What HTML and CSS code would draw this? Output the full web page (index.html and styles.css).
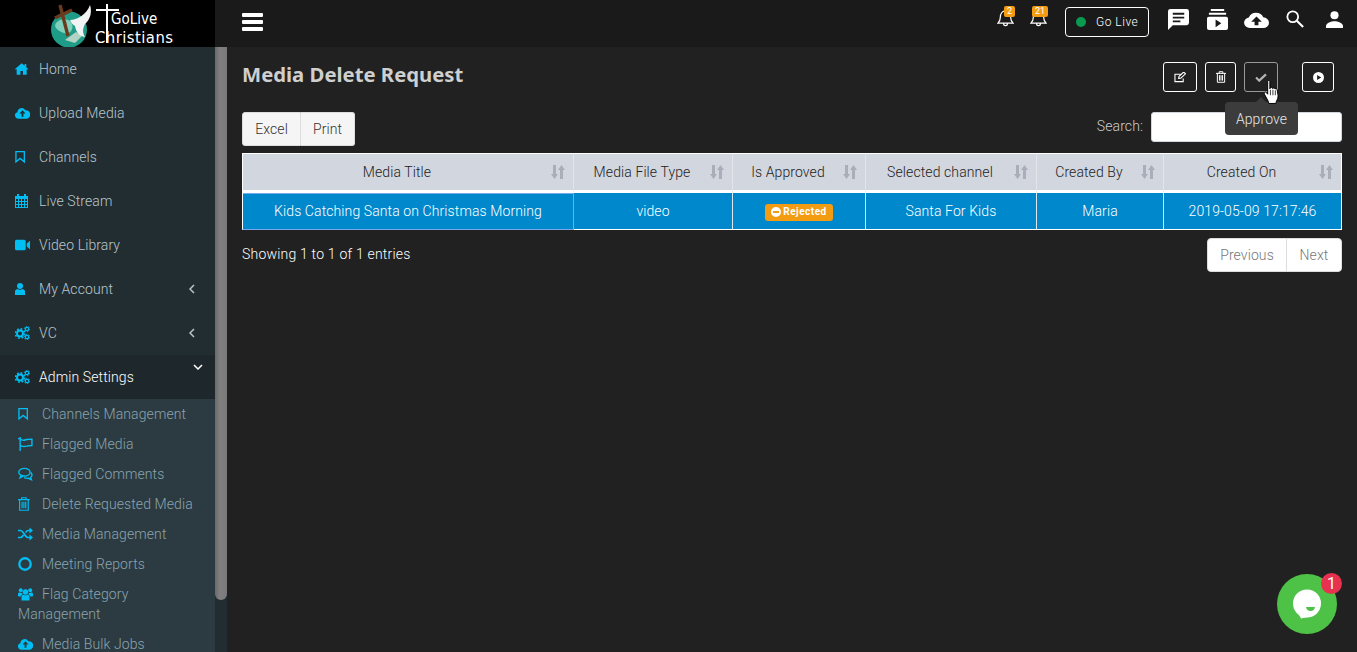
FILE: index.html
```html
<!DOCTYPE html>
<html lang="en">
<head>
<meta charset="utf-8">
<title>Media Delete Request</title>
<link rel="stylesheet" href="styles.css">
</head>
<body>
<svg class="defs" width="0" height="0" aria-hidden="true">
  <symbol id="i-home" viewBox="0 -1 18 16" preserveAspectRatio="xMinYMid meet"><path d="M8 0 0 7l1 1 1-.9V14h4.500V9.500h3V14H14V7.100l1 .9 1-1-2.500-2.200V1h-2v2.100z"/></symbol>
  <symbol id="i-cloud" viewBox="0 0 16 12" preserveAspectRatio="xMinYMid meet"><path fill-rule="evenodd" d="M3.500 12A3.500 3.500 0 0 1 2.600 5.100 4.500 4.500 0 0 1 11 3.100 3.800 3.800 0 0 1 12.500 12zM8 3 4.800 6.400H7V10h2V6.400h2.200z"/></symbol>
  <symbol id="i-bookmark" viewBox="0 -1 13 15" preserveAspectRatio="xMinYMid meet"><path fill="none" stroke="currentColor" stroke-width="1.400" d="M1 .7h9v11L5.500 8 1 11.700z"/></symbol>
  <symbol id="i-cal" viewBox="0 0 13 14" preserveAspectRatio="xMinYMid meet"><path fill-rule="evenodd" d="M0 2h2V0h2v2h5V0h2v2h2v12H0zM1 5v2h2V5zm3 0v2h2V5zm3 0v2h2V5zm3 0v2h2V5zM1 8v2h2V8zm3 0v2h2V8zm3 0v2h2V8zm3 0v2h2V8zm-9 3v2h2v-2zm3 0v2h2v-2zm3 0v2h2v-2zm3 0v2h2v-2z"/></symbol>
  <symbol id="i-video" viewBox="0 0 14 10" preserveAspectRatio="xMinYMid meet"><path d="M1.500 0h7A1.500 1.500 0 0 1 10 1.500v7A1.500 1.500 0 0 1 8.500 10h-7A1.500 1.500 0 0 1 0 8.500v-7A1.500 1.500 0 0 1 1.500 0zM11 3.500 14 1v8l-3-2.500z"/></symbol>
  <symbol id="i-user" viewBox="0 -1 11.500 14" preserveAspectRatio="xMinYMid meet"><circle cx="5" cy="3" r="3"/><path d="M0 12V8.500C0 7 1.500 6 2.500 6c.7.500 1.500.8 2.500.8S6.800 6.500 7.500 6C8.500 6 10 7 10 8.500V12z"/></symbol>
  <symbol id="i-cogs" viewBox="0 0 15 14" preserveAspectRatio="xMinYMid meet"><circle cx="5" cy="7.500" r="3" fill="none" stroke="currentColor" stroke-width="2"/><circle cx="5" cy="7.500" r="4.700" fill="none" stroke="currentColor" stroke-width="1.600" stroke-dasharray="1.800 1.900"/><circle cx="12" cy="3" r="1.700" fill="none" stroke="currentColor" stroke-width="1.200"/><circle cx="12" cy="3" r="2.700" fill="none" stroke="currentColor" stroke-width="1" stroke-dasharray="1.400 1.400"/><circle cx="12" cy="11" r="1.700" fill="none" stroke="currentColor" stroke-width="1.200"/><circle cx="12" cy="11" r="2.700" fill="none" stroke="currentColor" stroke-width="1" stroke-dasharray="1.400 1.400"/></symbol>
  <symbol id="i-flag" viewBox="0 0 14 13" preserveAspectRatio="xMinYMid meet"><path fill="none" stroke="currentColor" stroke-width="1.300" d="M2 0v13M0 1.500h1.500l2 1.200c2 .7 3 .1 4.500-.4 1.500-.4 3-.4 5-.4v6c-2 0-3.500.1-5 .6-1.500.4-3 .6-4.500 0l-1.500-.6"/></symbol>
  <symbol id="i-comments" viewBox="0 0 14 12" preserveAspectRatio="xMinYMid meet"><g fill="none" stroke="currentColor" stroke-width="1.300"><ellipse cx="6" cy="4.300" rx="5.300" ry="3.600"/><path d="M2.800 7.500 2 9.500l2.500-1.300M12 4.500c1.500 1.500 1.500 3.500-.3 4.800l.8 2-2.800-1.300c-1.500.2-3 0-4-.8"/></g></symbol>
  <symbol id="i-trash" viewBox="0 0 11 13" preserveAspectRatio="xMinYMid meet"><path fill="none" stroke="currentColor" stroke-width="1.100" d="M0 2.500h11M3.500 2.500V.7h4v1.800M1.500 2.500v9.800h8V2.500M3.800 4.500v6M5.500 4.500v6M7.200 4.500v6"/></symbol>
  <symbol id="i-random" viewBox="0 0 15 13" preserveAspectRatio="xMinYMid meet"><path fill="none" stroke="currentColor" stroke-width="1.700" d="M0 3h2.500c3 0 4.500 7 7.500 7h2M0 10h2.500c1.300 0 2.200-1.200 3-2.500M7.500 5C8.300 4 9 3 10 3h2"/><path d="M11.500 0 15 3l-3.500 3zM11.500 7l3.500 3-3.500 3z"/></symbol>
  <symbol id="i-ring" viewBox="0 0 12 12" preserveAspectRatio="xMinYMid meet"><circle cx="6" cy="6" r="4.900" fill="none" stroke="currentColor" stroke-width="2"/></symbol>
  <symbol id="i-users" viewBox="0 0 15 13" preserveAspectRatio="xMinYMid meet"><circle cx="7.500" cy="4.500" r="2.700"/><circle cx="2.800" cy="2.800" r="2"/><circle cx="12.200" cy="2.800" r="2"/><path d="M3.500 13V9.500c0-1.500 1-2.300 2-2.300l2 .8 2-.8c1 0 2 .8 2 2.300V13zM0 8V6.500C0 5.500.8 5 1.500 5L4 5.600 4.800 7C3.500 7.300 2.800 8 2.600 9H1C.5 9 0 8.600 0 8zM15 8V6.500c0-1-.8-1.500-1.500-1.500L11 5.600 10.200 7c1.300.3 2 1 2.200 2H14c.5 0 1-.4 1-1z"/></symbol>
  <symbol id="i-bell" viewBox="0 0 18 20"><path fill="none" stroke="currentColor" stroke-width="1.300" d="M1 16c1.500-1.500 2.500-2.500 2.500-6C3.500 6 5.500 3 9 3s5.500 3 5.500 7c0 3.500 1 4.500 2.500 6zM7 16.500a2 2 0 0 0 4 0M9 3V1"/></symbol>
  <symbol id="i-sort" viewBox="0 0 14 14"><path d="M2 0h3v9h2L3.500 14 0 9h2zM9 14h3V5h2L10.500 0 7 5h2z"/></symbol>
</svg>

<aside class="sidebar">
  <div class="sidebar-col">
    <a class="logo">
      <svg class="logo-art" viewBox="0 0 44 44" width="44" height="44" aria-hidden="true">
        <circle cx="19" cy="26.500" r="18" fill="#1f9c88"/>
        <path d="M6 20c6-6 14-4 16 1s-2 11-8 9-11-6-8-10z" fill="#7fd0bd"/>
        <path d="M15 37l11-8 6 4-7 7z" fill="#b4d2c4"/>
        <path d="M10 2l8 31" stroke="#6b3a1e" stroke-width="3.400" fill="none"/>
        <path d="M5 15l17-8" stroke="#6b3a1e" stroke-width="3.400" fill="none"/>
        <path d="M20 17c7 0 17-6 20-15 2 6 1 14-5 19-2 4-3 8 0 13-6-1-9-5-10-11-2-1-4-3-5-6z" fill="#f2f4f4"/>
      </svg>
      <span class="logo-cross" aria-hidden="true"></span>
      <span class="logo-text"><span class="logo-l1">GoLive</span><span class="logo-l2">Christians</span></span>
    </a>
    <nav class="menu">
      <a class="item"><svg class="ic"><use href="#i-home"/></svg><span>Home</span></a>
      <a class="item"><svg class="ic"><use href="#i-cloud"/></svg><span>Upload Media</span></a>
      <a class="item"><svg class="ic"><use href="#i-bookmark"/></svg><span>Channels</span></a>
      <a class="item"><svg class="ic"><use href="#i-cal"/></svg><span>Live Stream</span></a>
      <a class="item"><svg class="ic"><use href="#i-video"/></svg><span>Video Library</span></a>
      <a class="item"><svg class="ic"><use href="#i-user"/></svg><span>My Account</span><svg class="chev" viewBox="0 0 6 10"><path d="M5 1 1 5l4 4" fill="none" stroke="currentColor" stroke-width="1.500"/></svg></a>
      <a class="item"><svg class="ic"><use href="#i-cogs"/></svg><span>VC</span><svg class="chev" viewBox="0 0 6 10"><path d="M5 1 1 5l4 4" fill="none" stroke="currentColor" stroke-width="1.500"/></svg></a>
      <a class="item active"><svg class="ic"><use href="#i-cogs"/></svg><span>Admin Settings</span><svg class="chev-down" viewBox="0 0 10 6"><path d="M1 1l4 4 4-4" fill="none" stroke="currentColor" stroke-width="1.500"/></svg></a>
      <div class="sub">
        <a class="sub-item"><svg class="ic"><use href="#i-bookmark"/></svg>Channels Management</a>
        <a class="sub-item"><svg class="ic"><use href="#i-flag"/></svg>Flagged Media</a>
        <a class="sub-item"><svg class="ic"><use href="#i-comments"/></svg>Flagged Comments</a>
        <a class="sub-item"><svg class="ic"><use href="#i-trash"/></svg>Delete Requested Media</a>
        <a class="sub-item"><svg class="ic"><use href="#i-random"/></svg>Media Management</a>
        <a class="sub-item"><svg class="ic"><use href="#i-ring"/></svg>Meeting Reports</a>
        <a class="sub-item"><svg class="ic"><use href="#i-users"/></svg>Flag Category Management</a>
        <a class="sub-item"><svg class="ic"><use href="#i-cloud"/></svg>Media Bulk Jobs</a>
      </div>
    </nav>
  </div>
  <div class="scroll"><div class="thumb"></div></div>
</aside>

<div class="main">
  <header class="topbar">
    <svg class="burger" viewBox="0 0 21 18" width="21" height="18" aria-hidden="true"><path d="M1 0h19a1 1 0 0 1 1 1v2a1 1 0 0 1-1 1H1a1 1 0 0 1-1-1V1a1 1 0 0 1 1-1zM1 7h19a1 1 0 0 1 1 1v2a1 1 0 0 1-1 1H1a1 1 0 0 1-1-1V8a1 1 0 0 1 1-1zM1 14h19a1 1 0 0 1 1 1v2a1 1 0 0 1-1 1H1a1 1 0 0 1-1-1v-2a1 1 0 0 1 1-1z" fill="#fff"/></svg>
    <div class="top-right">
      <span class="bell"><svg class="bell-ic"><use href="#i-bell"/></svg><b class="badge">2</b></span>
      <span class="bell"><svg class="bell-ic"><use href="#i-bell"/></svg><b class="badge">21</b></span>
      <a class="golive"><i class="dot"></i>Go Live</a>
      <svg class="t-ic t-chat" viewBox="0 0 22 22" aria-hidden="true"><path fill-rule="evenodd" d="M2.500 0h17A2.500 2.500 0 0 1 22 2.500v12a2.500 2.500 0 0 1-2.500 2.500H5l-5 5V2.500A2.500 2.500 0 0 1 2.500 0zM5 4v2h12V4zm0 4v2h12V8zm0 4v2h8v-2z" fill="#fff"/></svg>
      <svg class="t-ic t-subs" viewBox="0 0 22 22" aria-hidden="true"><path fill-rule="evenodd" d="M4 0h14v2H4zM2 4h18v2H2zM2 8h18a2 2 0 0 1 2 2v10a2 2 0 0 1-2 2H2a2 2 0 0 1-2-2V10a2 2 0 0 1 2-2zm7 3v8l6-4z" fill="#fff"/></svg>
      <svg class="t-ic t-cloud" viewBox="0 0 26 18" preserveAspectRatio="none" aria-hidden="true"><path fill-rule="evenodd" d="M6 18A6 6 0 0 1 5 6.100 8 8 0 0 1 20 6a6 6 0 0 1 0 12zM13 5 7.500 11H11v4h4v-4h3.500z" fill="#fff"/></svg>
      <svg class="t-ic t-search" viewBox="0 0 20 20" aria-hidden="true"><circle cx="7.500" cy="7.500" r="6" fill="none" stroke="#fff" stroke-width="2"/><path d="m12 12 7 7" stroke="#fff" stroke-width="2.400"/></svg>
      <svg class="t-ic t-person" viewBox="0 0 18 18" aria-hidden="true"><circle cx="9" cy="4.500" r="4.300" fill="#fff"/><path d="M0 18v-2c0-3.500 5.500-5.200 9-5.200s9 1.700 9 5.200v2z" fill="#fff"/></svg>
    </div>
  </header>

  <section class="content">
    <div class="head">
      <h1>Media Delete Request</h1>
      <div class="actions">
        <button class="act act-edit"><svg viewBox="0 0 13 12" width="12" height="11" aria-hidden="true"><path d="M10 7v3.500H1v-8h6M5 7l.5-2.200L10.500 0 12.500 2 7.300 6.800z" fill="none" stroke="#fff" stroke-width="1.200"/></svg></button>
        <button class="act act-del"><svg viewBox="0 0 11 13" width="10" height="12" aria-hidden="true" class="ic-white"><use href="#i-trash"/></svg></button>
        <button class="act act-ok"><svg viewBox="0 0 13 10" width="12" height="9" aria-hidden="true"><path d="M1 5l3.500 3.500L12 1.500" fill="none" stroke="#b5b5b5" stroke-width="2.400"/></svg></button>
        <button class="act act-play"><svg viewBox="0 0 12 12" width="11" height="11" aria-hidden="true"><path fill-rule="evenodd" d="M6 0a6 6 0 1 1 0 12A6 6 0 0 1 6 0zM4.500 3.300v5.400L9 6z" fill="#fff"/></svg></button>
      </div>
    </div>

    <div class="tools">
      <div class="btn-group"><button class="btn">Excel</button><button class="btn">Print</button></div>
      <label class="search">Search:<input class="search-input" type="text"></label>
    </div>

    <table class="grid">
      <thead>
        <tr>
          <th class="c1">Media Title<svg class="sort"><use href="#i-sort"/></svg></th>
          <th class="c2">Media File Type<svg class="sort"><use href="#i-sort"/></svg></th>
          <th class="c3">Is Approved<svg class="sort"><use href="#i-sort"/></svg></th>
          <th class="c4">Selected channel<svg class="sort"><use href="#i-sort"/></svg></th>
          <th class="c5">Created By<svg class="sort"><use href="#i-sort"/></svg></th>
          <th class="c6">Created On<svg class="sort"><use href="#i-sort"/></svg></th>
        </tr>
      </thead>
      <tbody>
        <tr>
          <td class="first">Kids Catching Santa on Christmas Morning</td>
          <td>video</td>
          <td><span class="label"><svg viewBox="0 0 10 10" width="10" height="10" aria-hidden="true"><path fill-rule="evenodd" d="M5 0a5 5 0 1 1 0 10A5 5 0 0 1 5 0zM2 4v2h6V4z" fill="#fff"/></svg>Rejected</span></td>
          <td>Santa For Kids</td>
          <td>Maria</td>
          <td>2019-05-09 17:17:46</td>
        </tr>
      </tbody>
    </table>

    <div class="foot">
      <div class="info">Showing 1 to 1 of 1 entries</div>
      <div class="pager"><a class="page">Previous</a><a class="page">Next</a></div>
    </div>
  </section>
</div>

<div class="tooltip">Approve</div>
<svg class="hand" viewBox="0 0 15 22" width="17" height="24" aria-hidden="true"><path d="M4 1.200c0-1 2-1 2 0V8l.5-1c1-.5 2 0 2 .8.600-.8 2-.5 2.200.4.700-.6 2-.2 2 .8l.8 5c.1 2-.5 4-1.500 5.500l-.5 2H5l-.5-2L1 13c-.8-1.500.8-2.500 1.800-1.500L4 13z" fill="#fff" stroke="#000" stroke-width=".9"/><path d="M6.500 9v5M8.800 9v5M11 9.500V14" stroke="#000" stroke-width=".7" fill="none"/></svg>

<div class="chat">
  <svg viewBox="0 0 30 30" width="30" height="30" aria-hidden="true"><circle cx="15" cy="14.500" r="14" fill="#fff"/><path d="M6 24l3 5.500 7-1.500z" fill="#fff"/><path d="M14 18h9c-.5 2.500-2 4-4.500 4S14.500 20.500 14 18z" fill="#4dc247"/></svg>
  <b class="chat-badge">1</b>
</div>
</body>
</html>
```
FILE: styles.css
```css
* { box-sizing: border-box; }
html, body { height: 100%; }
body {
  margin: 0;
  display: flex;
  height: 652px;
  overflow: hidden;
  background: #212121;
  font: 300 14px/20px Roboto, "Liberation Sans", sans-serif;
  letter-spacing: .1px;
  color: #fff;
}
.defs { position: absolute; }
.sidebar { width: 227px; flex: none; display: flex; height: 652px; overflow: hidden; background: #222d32; }
.sidebar-col { width: 215px; flex: none; }
.scroll { width: 12px; flex: none; padding-top: 47px; background: linear-gradient(#1a1a1a 47px, #222d32 47px); }
.thumb { height: 553px; border-radius: 0 0 6px 6px; background: linear-gradient(90deg, #6a6a6a, #808080 40%, #7a7a7a); }

.logo { height: 47px; background: #000; display: flex; align-items: flex-start; padding-left: 50px; position: relative; }
.logo-art { margin-top: 3px; flex: none; }
.logo-cross { position: absolute; left: 106px; top: 4px; width: 2px; height: 39px; background: #fff; }
.logo-cross::after { content: ""; position: absolute; left: -10px; top: 5px; width: 23px; height: 2px; background: #fff; }
.logo-text { display: flex; flex-direction: column; color: #fff; font-family: "DejaVu Sans Condensed", "DejaVu Sans", sans-serif; font-weight: 400; letter-spacing: 0; }
.logo-l1 { font-size: 15px; line-height: 15px; margin: 12px 0 0 17px; }
.logo-l2 { font-size: 16.500px; line-height: 16px; letter-spacing: .45px; margin: 2.500px 0 0 1px; }

.menu { color: #b8c7ce; }
.item { height: 44px; display: flex; align-items: center; padding-left: 15px; position: relative; }
.item .ic { width: 15px; height: 14px; margin-right: 9px; fill: #00bdf2; color: #00bdf2; flex: none; }
.item.active { background: #1e282c; color: #fff; }
.chev { position: absolute; left: 189px; top: 17px; width: 6px; height: 10px; color: #b8c7ce; }
.chev-down { position: absolute; left: 193px; top: 9px; width: 10px; height: 6px; color: #fff; }
.sub { background: #2c3b41; color: #8aa4af; padding-bottom: 20px; }
.sub-item { display: block; padding: 5px 5px 5px 18px; line-height: 20px; }
.sub-item .ic { width: 15px; height: 14px; margin-right: 9px; fill: #00bdf2; color: #00bdf2; vertical-align: -2px; }

.main { flex: 1; min-width: 0; display: flex; flex-direction: column; }
.topbar { height: 47px; flex: none; background: #1a1a1a; display: flex; align-items: center; justify-content: space-between; padding: 0 14px 0 15px; }
.burger { margin-top: -3px; }
.top-right { display: flex; align-items: center; }
.bell { position: relative; display: block; width: 17px; height: 19px; margin-right: 16px; top: -6px; }
.bell + .bell { margin-right: 18px; }
.bell-ic { width: 17px; height: 19px; color: #fff; display: block; }
.badge { position: absolute; left: 7px; top: -2px; min-width: 11px; height: 11px; padding: 0 2px; border-radius: 2px; background: #f39c12; font: 400 9px/11px Roboto, sans-serif; letter-spacing: 0; text-align: center; }
.bell + .bell .badge { left: 2px; min-width: 16px; }
.golive { width: 84px; height: 30px; border: 1px solid #fff; border-radius: 4px; display: flex; align-items: center; padding-left: 10px; font-size: 12px; letter-spacing: .5px; margin-right: 19px; margin-top: -3px; }
.dot { width: 10px; height: 10px; border-radius: 50%; background: #0a9a4f; margin-right: 10px; }
.t-ic { display: block; flex: none; }
.t-chat { width: 21px; height: 21px; margin-right: 18px; margin-top: -8px; }
.t-subs { width: 21px; height: 21px; margin-right: 16px; margin-top: -8px; }
.t-cloud { width: 25px; height: 16px; margin-right: 17px; margin-top: -7px; }
.t-search { width: 18px; height: 18px; margin-right: 22px; margin-top: -9px; }
.t-person { width: 17px; height: 17px; margin-top: -8px; }

.content { padding: 0 15px; flex: 1; }
.head { display: flex; justify-content: space-between; height: 65px; }
h1 { margin: 12px 0 0; font: 700 20.300px/30px "Noto Sans", sans-serif; letter-spacing: 0; color: #cfcfcf; }
.actions { display: flex; padding: 15px 8px 0 0; }
.act { height: 30px; background: transparent; border: 1px solid #fff; border-radius: 3px; padding: 0; display: flex; align-items: center; justify-content: center; }
.act-edit { width: 34px; margin-right: 8px; }
.act-del { width: 31px; margin-right: 8px; }
.act-ok { width: 34px; margin-right: 24px; border-color: #999; }
.act-play { width: 32px; }
.ic-white { color: #fff; }

.tools { display: flex; justify-content: space-between; height: 41px; }
.btn-group { display: flex; height: 34px; }
.btn { height: 34px; background: #f5f5f5; border: 1px solid #ddd; color: #333; font: inherit; letter-spacing: .1px; padding: 0; border-radius: 3px 0 0 3px; }
.btn + .btn { border-left: 0; border-radius: 0 3px 3px 0; width: 54px; }
.btn:first-child { width: 59px; }
.search { display: flex; gap: 8px; color: #ccc; align-items: flex-start; line-height: 28px; }
.search-input { width: 191px; height: 30px; border: 1px solid #d2d6de; border-radius: 3px; background: #fff; padding: 0; }

.grid { width: 1100px; table-layout: fixed; border-collapse: separate; border-spacing: 0; }
.grid th, .grid td { text-align: center; position: relative; padding: 0; }
.grid th { height: 40px; background: #d2d6de; color: #222; font-weight: 300; padding-right: 22px; border-top: 1px solid #fff; border-right: 1px solid #e3e5ea; border-bottom: 3px solid #fff; }
.grid th:first-child { border-left: 1px solid #fff; }
.grid th:last-child { border-right-color: #fff; }
.c1 { width: 332px; } .c2 { width: 159px; } .c3 { width: 133px; } .c4 { width: 171px; } .c5 { width: 127px; } .c6 { width: 178px; }
.sort { position: absolute; right: 8px; top: 11px; width: 14px; height: 14px; fill: #a9aeb9; }
.grid td { height: 37px; background: #0088cc; border-right: 1px solid #dfe7ee; border-bottom: 1px solid #fff; }
.grid td:last-child { border-right-color: #fff; }
.grid td.first { border-left: 1px solid #fff; border-right-color: #7aa8ec; border-bottom-color: #7aa8ec; box-shadow: inset 0 1px 0 #7aa8ec; }
.label { display: inline-flex; align-items: center; justify-content: center; gap: 2px; width: 68px; height: 17px; border-radius: 3px; background: #f39c12; color: #fff; font-size: 10px; font-weight: 700; letter-spacing: .5px; vertical-align: middle; }

.foot { display: flex; justify-content: space-between; padding-top: 8px; }
.info { padding-top: 6px; letter-spacing: .2px; }
.pager { display: flex; height: 34px; background: #fff; border: 1px solid #ddd; border-radius: 4px; color: #777; }
.page { line-height: 32px; text-align: center; }
.page:first-child { width: 79px; border-right: 1px solid #ddd; }
.page:last-child { width: 54px; }

.tooltip { position: absolute; left: 1225px; top: 102px; width: 73px; height: 33px; background: #3c3c3c; border-radius: 4px; color: #e8e8e8; text-align: center; line-height: 34px; }
.tooltip::before { content: ""; position: absolute; left: 31px; top: -5px; border: 5px solid transparent; border-top: 0; border-bottom-color: #3c3c3c; }
.hand { position: absolute; left: 1263px; top: 80px; }
.chat { position: absolute; left: 1277px; top: 574px; width: 60px; height: 60px; border-radius: 50%; background: #4dc247; display: flex; align-items: center; justify-content: center; }
.chat-badge { position: absolute; left: 44px; top: -1px; width: 21px; height: 21px; border-radius: 50%; background: #e8304f; font: 400 16px/21px Roboto, sans-serif; letter-spacing: 0; text-align: center; }
```
